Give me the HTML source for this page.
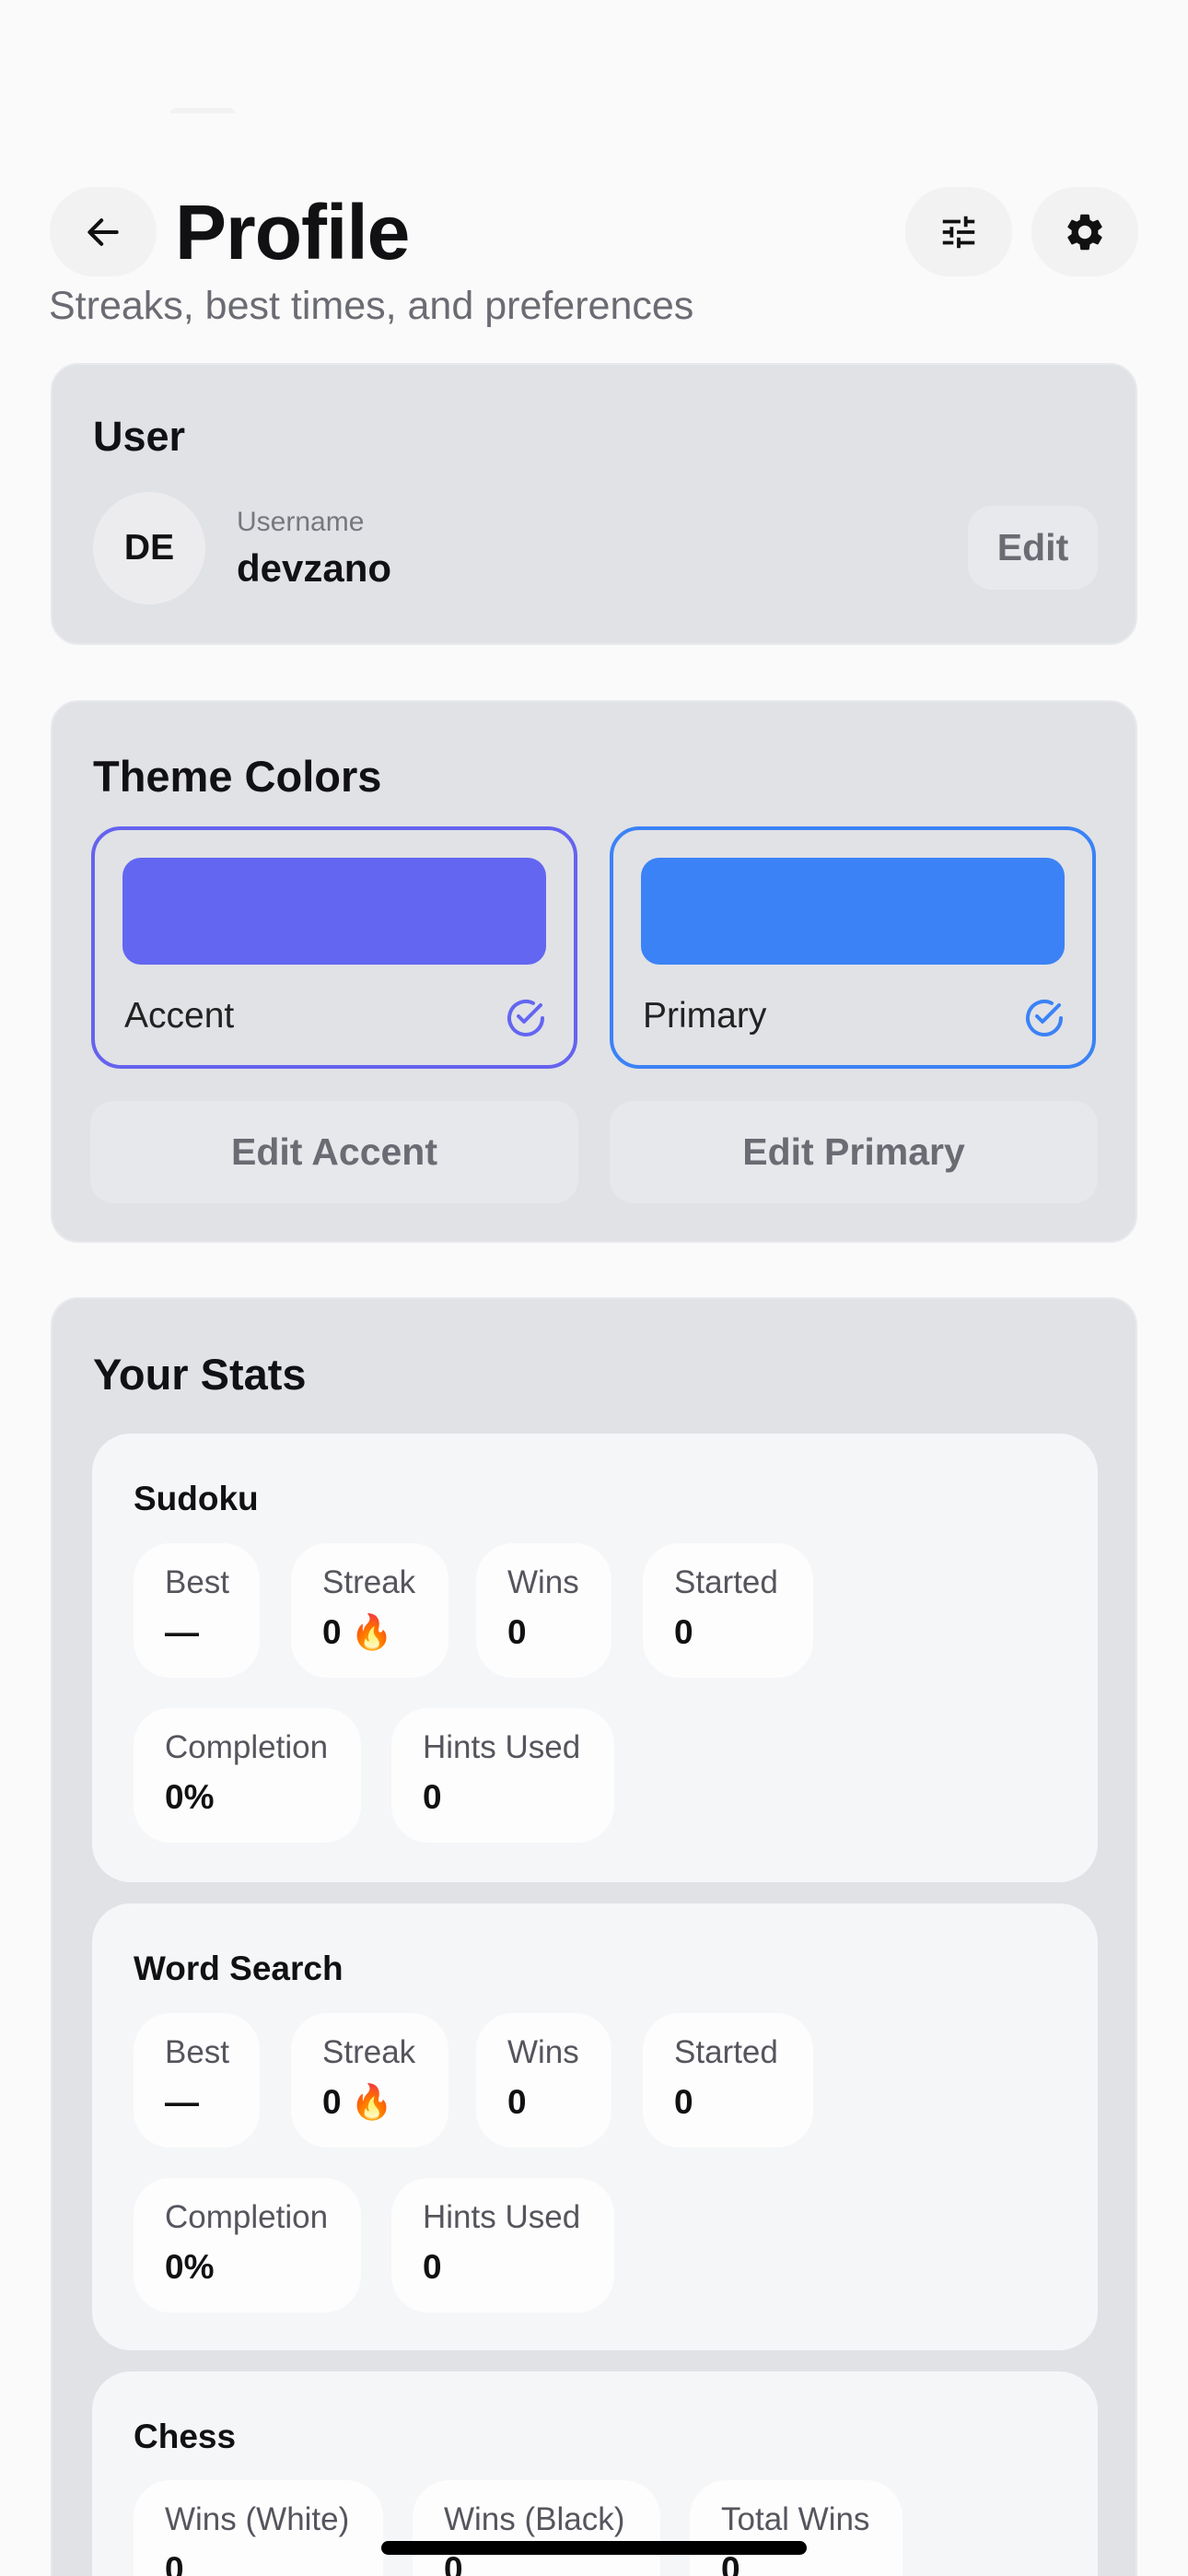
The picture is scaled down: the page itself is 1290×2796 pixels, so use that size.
<!DOCTYPE html>
<html><head><meta charset="utf-8">
<style>
*{margin:0;padding:0;box-sizing:border-box}
html,body{width:1290px;height:2796px;overflow:hidden;background:#fafafa;font-family:"Liberation Sans",sans-serif;color:#111114}
#w{position:relative;width:1290px;height:2796px;overflow:hidden}
.a{position:absolute}
.btn{position:absolute;background:#f2f2f3;border-radius:48px;display:flex;align-items:center;justify-content:center}
.card{position:absolute;left:55px;width:1180px;background:#e0e2e6;border:2px solid #e8e9ec;border-radius:30px}
.h{position:absolute;font-weight:700;font-size:47px;left:44px}
.tile{position:absolute;top:897px;width:528px;height:263px;border:4px solid;border-radius:32px}
.sw{position:absolute;left:30px;top:30px;right:30px;height:116px;border-radius:20px}
.tl{position:absolute;left:32px;top:180px;font-size:39px;color:#222}
.eb{position:absolute;top:1195px;width:530px;height:111px;background:#e7e8eb;border-radius:26px;display:flex;align-items:center;justify-content:center;font-size:41px;font-weight:700;color:#6b6b73}
.game{position:absolute;left:100px;width:1092px;background:#f5f6f8;border-radius:42px;overflow:hidden}
.gt{position:absolute;left:45px;top:50px;font-size:37px;font-weight:700}
.chip{position:absolute;background:#fdfdfd;border-radius:40px;height:146px;overflow:hidden}
.chip .l{position:absolute;left:34px;top:23px;font-size:35px;color:#55555d;white-space:nowrap}
.chip .v{position:absolute;left:34px;top:76px;font-size:37px;font-weight:700;white-space:nowrap}
</style></head><body><div id="w">
<div class="a" style="left:185px;top:117px;width:70px;height:6px;background:#f2f2f3;border-radius:30px 30px 0 0"></div>

<div class="btn" style="left:54px;top:203px;width:116px;height:97px">
<svg width="44" height="44" viewBox="0 0 24 24" fill="none" stroke="#111" stroke-width="2.2" stroke-linecap="round" stroke-linejoin="round"><path d="M20 12H5M11 5l-7 7 7 7"/></svg></div>
<div class="a" style="left:190px;top:204px;font-size:84px;font-weight:700;letter-spacing:-1px">Profile</div>
<div class="a" style="left:53px;top:308px;font-size:43px;color:#6b6b73">Streaks, best times, and preferences</div>
<div class="btn" style="left:983px;top:203px;width:116px;height:97px">
<svg width="46" height="46" viewBox="0 0 24 24" fill="#111"><path d="M3 17v2h6v-2H3zM3 5v2h10V5H3zm10 16v-2h8v-2h-8v-2h-2v6h2zM7 9v2H3v2h4v2h2V9H7zm14 4v-2H11v2h10zm-6-4h2V7h4V5h-4V3h-2v6z"/></svg></div>
<div class="btn" style="left:1120px;top:203px;width:116px;height:97px">
<svg width="48" height="48" viewBox="0 0 24 24" fill="#111"><path d="M19.14 12.94c.04-.3.06-.61.06-.94 0-.32-.02-.64-.07-.94l2.03-1.58a.49.49 0 0 0 .12-.61l-1.920-3.32a.488.488 0 0 0-.59-.22l-2.39.96c-.5-.38-1.03-.7-1.62-.94l-.36-2.54a.484.484 0 0 0-.48-.41h-3.840c-.24 0-.43.17-.47.41l-.36 2.54c-.59.24-1.130.57-1.62.94l-2.39-.96c-.22-.08-.47 0-.59.22L2.74 8.87c-.12.21-.08.47.12.61l2.03 1.58c-.05.3-.09.63-.09.94s.02.64.07.94l-2.03 1.58a.49.49 0 0 0-.12.61l1.92 3.32c.12.22.37.29.59.22l2.39-.96c.5.38 1.030.7 1.62.94l.36 2.54c.05.24.24.41.48.41h3.84c.24 0 .44-.17.47-.41l.36-2.54c.59-.24 1.13-.56 1.62-.94l2.39.96c.22.08.47 0 .59-.22l1.92-3.32c.12-.22.07-.47-.12-.61l-2.01-1.58zM12 15.6c-1.98 0-3.6-1.62-3.6-3.6s1.62-3.6 3.6-3.6 3.6 1.62 3.6 3.6-1.62 3.6-3.6 3.6z"/></svg></div>

<div class="card" style="top:394px;height:306px">
<div class="a" style="left:44px;top:52px;font-weight:700;font-size:45px">User</div>
<div class="a" style="left:44px;top:138px;width:122px;height:122px;border-radius:50%;background:#ececee;display:flex;align-items:center;justify-content:center;font-weight:700;font-size:39px">DE</div>
<div class="a" style="left:200px;top:154px;font-size:30px;color:#77777e">Username</div>
<div class="a" style="left:200px;top:197px;font-size:42px;font-weight:700">devzano</div>
<div class="a" style="left:994px;top:153px;width:141px;height:91px;border-radius:26px;background:#e8e9ec;display:flex;align-items:center;justify-content:center;font-size:41px;font-weight:700;color:#6b6b73">Edit</div>
</div>

<div class="card" style="top:760px;height:589px">
<div class="h" style="top:53px">Theme Colors</div>
</div>
<div class="tile" style="left:99px;border-color:#6563ee"><div class="sw" style="background:#6366f1"></div><div class="tl">Accent</div>
<svg class="a" style="left:444px;top:180px" width="48" height="48" viewBox="0 0 24 24" fill="none" stroke="#6366f1" stroke-width="2" stroke-linecap="round" stroke-linejoin="round"><path d="M21 12a9 9 0 1 1-5-8.06"/><path d="M8 11l3 3 9-9"/></svg></div>
<div class="tile" style="left:662px;border-color:#3b82f6"><div class="sw" style="background:#3b82f6"></div><div class="tl">Primary</div>
<svg class="a" style="left:444px;top:180px" width="48" height="48" viewBox="0 0 24 24" fill="none" stroke="#3b82f6" stroke-width="2" stroke-linecap="round" stroke-linejoin="round"><path d="M21 12a9 9 0 1 1-5-8.06"/><path d="M8 11l3 3 9-9"/></svg></div>
<div class="eb" style="left:98px">Edit Accent</div>
<div class="eb" style="left:662px">Edit Primary</div>

<div class="card" style="top:1408px;height:1388px;border-bottom:none;border-radius:30px 30px 0 0">
<div class="h" style="top:54px">Your Stats</div>
</div>

<div class="game" style="top:1556px;height:487px">
<div class="gt">Sudoku</div>
<div class="chip" style="left:45px;top:119px;width:137px"><div class="l">Best</div><div class="v">—</div></div>
<div class="chip" style="left:216px;top:119px;width:171px"><div class="l">Streak</div><div class="v">0 🔥</div></div>
<div class="chip" style="left:417px;top:119px;width:147px"><div class="l">Wins</div><div class="v">0</div></div>
<div class="chip" style="left:598px;top:119px;width:185px"><div class="l">Started</div><div class="v">0</div></div>
<div class="chip" style="left:45px;top:298px;width:247px"><div class="l">Completion</div><div class="v">0%</div></div>
<div class="chip" style="left:325px;top:298px;width:242px"><div class="l">Hints Used</div><div class="v">0</div></div>
</div>

<div class="game" style="top:2066px;height:485px">
<div class="gt">Word Search</div>
<div class="chip" style="left:45px;top:119px;width:137px"><div class="l">Best</div><div class="v">—</div></div>
<div class="chip" style="left:216px;top:119px;width:171px"><div class="l">Streak</div><div class="v">0 🔥</div></div>
<div class="chip" style="left:417px;top:119px;width:147px"><div class="l">Wins</div><div class="v">0</div></div>
<div class="chip" style="left:598px;top:119px;width:185px"><div class="l">Started</div><div class="v">0</div></div>
<div class="chip" style="left:45px;top:298px;width:247px"><div class="l">Completion</div><div class="v">0%</div></div>
<div class="chip" style="left:325px;top:298px;width:242px"><div class="l">Hints Used</div><div class="v">0</div></div>
</div>

<div class="game" style="top:2574px;height:222px;border-radius:42px 42px 0 0">
<div class="gt">Chess</div>
<div class="chip" style="left:45px;top:118px;width:271px;height:104px;border-radius:40px 40px 0 0"><div class="l">Wins (White)</div><div class="v">0</div></div>
<div class="chip" style="left:348px;top:118px;width:269px;height:104px;border-radius:40px 40px 0 0"><div class="l">Wins (Black)</div><div class="v">0</div></div>
<div class="chip" style="left:649px;top:118px;width:231px;height:104px;border-radius:40px 40px 0 0"><div class="l">Total Wins</div><div class="v">0</div></div>
</div>

<div class="a" style="left:414px;top:2758px;width:462px;height:15px;background:#000;border-radius:8px"></div>
</div></body></html>
